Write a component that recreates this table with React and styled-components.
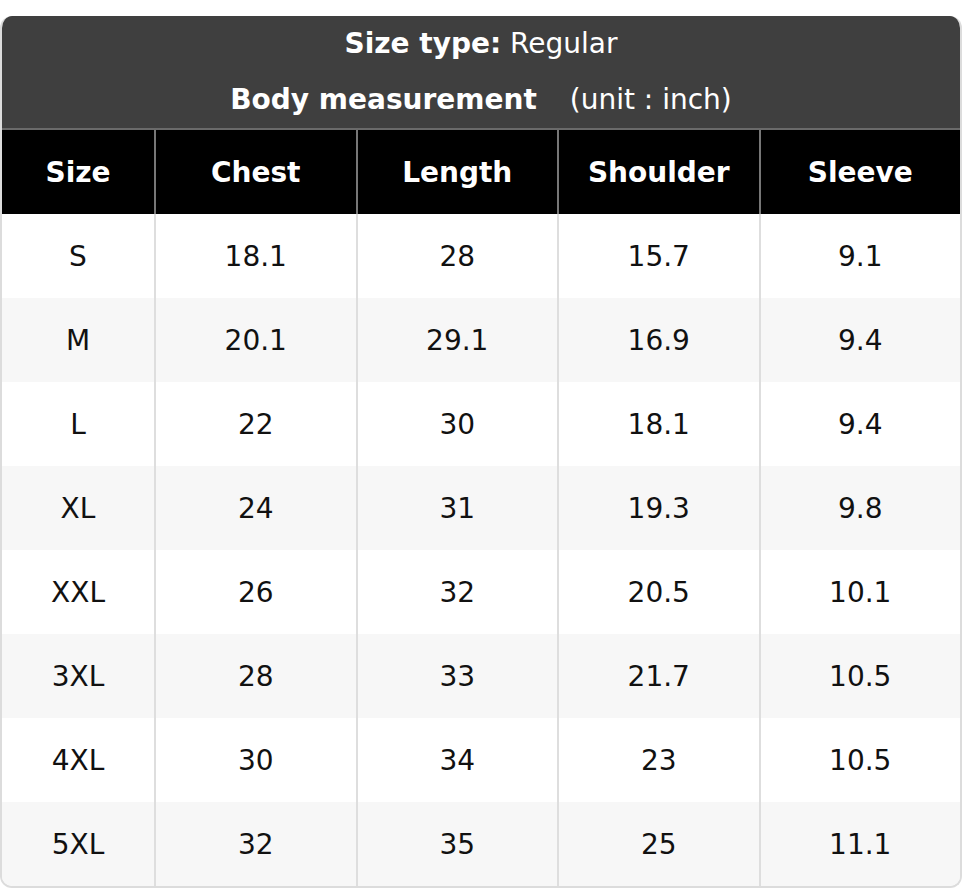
import React from "react";
import styled, { createGlobalStyle } from "styled-components";

const Global = createGlobalStyle`
  html, body { margin: 0; padding: 0; background: #fff; }
  body { font-family: "DejaVu Sans", sans-serif; }
`;

const Wrap = styled.div`
  margin-top: 16px;
  border: 2px solid #dcdcdc;
  border-top: none;
  border-radius: 12px;
  overflow: hidden;
  box-sizing: border-box;
  width: 962px;
`;

const Title = styled.div`
  background: #3f3f3f;
  color: #fff;
  text-align: center;
  font-size: 28px;
  border-bottom: 2px solid #6a6a6a;
`;

const TitleLine = styled.div`
  height: 56px;
  line-height: 56px;
  white-space: nowrap;
`;

const Strong = styled.b`
  font-weight: bold;
`;

const Unit = styled.span`
  margin-left: 24px;
`;

const Row = styled.div`
  display: grid;
  grid-template-columns: 152px repeat(4, 1fr);
  height: 84px;
  background: ${(p) => (p.$head ? "#000" : p.$alt ? "#f7f7f7" : "#fff")};
  color: ${(p) => (p.$head ? "#fff" : "#111")};
  font-weight: ${(p) => (p.$head ? "bold" : "normal")};
  font-size: 28px;
`;

const Cell = styled.div`
  display: flex;
  align-items: center;
  justify-content: center;
  border-left: ${(p) => (p.$first ? "none" : `2px solid ${p.$head ? "#777" : "#dedede"}`)};
`;

const cols = ["Size", "Chest", "Length", "Shoulder", "Sleeve"];
const data = [
  ["S", "18.1", "28", "15.7", "9.1"],
  ["M", "20.1", "29.1", "16.9", "9.4"],
  ["L", "22", "30", "18.1", "9.4"],
  ["XL", "24", "31", "19.3", "9.8"],
  ["XXL", "26", "32", "20.5", "10.1"],
  ["3XL", "28", "33", "21.7", "10.5"],
  ["4XL", "30", "34", "23", "10.5"],
  ["5XL", "32", "35", "25", "11.1"],
];

export default function App() {
  return (
    <>
      <Global />
      <Wrap>
        <Title>
          <TitleLine>
            <Strong>Size type:</Strong> Regular
          </TitleLine>
          <TitleLine>
            <Strong>Body measurement</Strong>
            <Unit> (unit : inch)</Unit>
          </TitleLine>
        </Title>
        <Row $head>
          {cols.map((c, i) => (
            <Cell key={c} $head $first={i === 0}>
              {c}
            </Cell>
          ))}
        </Row>
        {data.map((r, ri) => (
          <Row key={r[0]} $alt={ri % 2 === 1}>
            {r.map((v, i) => (
              <Cell key={i} $first={i === 0}>
                {v}
              </Cell>
            ))}
          </Row>
        ))}
      </Wrap>
    </>
  );
}
